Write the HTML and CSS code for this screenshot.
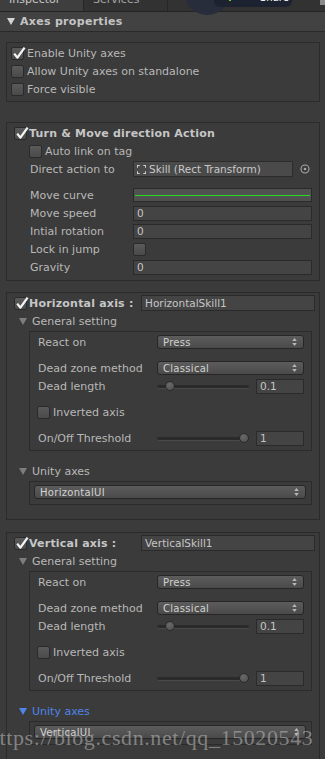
FILE: index.html
```html
<!DOCTYPE html>
<html lang="en">
<head>
    <meta charset="UTF-8">
    <meta name="viewport" content="width=device-width, initial-scale=1.0">
    <title>Inspector - Axes properties</title>
    <link rel="stylesheet" href="styles.css">
</head>

<body>
    <svg class="defs" aria-hidden="true">
        <symbol id="check" viewBox="0 0 14 14">
            <path d="M2.2 7.6 L5.4 11.6 L12.6 1.6" fill="none" stroke="#f4f4f4" stroke-width="2.3" stroke-linejoin="round"/>
        </symbol>
        <symbol id="tri" viewBox="0 0 8 7">
            <path d="M0 0 H8 L4 7 Z"/>
        </symbol>
        <symbol id="updown" viewBox="0 0 5 9">
            <path d="M2.5 0 L5 3.5 H0 Z M0 5.5 H5 L2.5 9 Z"/>
        </symbol>
    </svg>

    <div class="tabs">
        <div class="tab active"><span>Inspector</span></div>
        <div class="tab"><span>Services</span></div>
        <div class="tab-scroll"></div>
    </div>
    <div class="tab-orb"></div>
    <div class="tab-pill"><i></i><span>Share</span></div>

    <header class="inspector-head">
        <svg class="fold light"><use href="#tri"/></svg>
        Axes properties
    </header>

    <main class="panel">
        <!-- unity axes toggles -->
        <section class="box toggles">
            <div class="row"><span class="cb"><svg><use href="#check"/></svg></span>Enable Unity axes</div>
            <div class="row"><span class="cb"></span>Allow Unity axes on standalone</div>
            <div class="row"><span class="cb"></span>Force visible</div>
        </section>

        <!-- turn & move -->
        <section class="box action">
            <div class="row head"><span class="cb"><svg><use href="#check"/></svg></span>Turn &amp; Move direction Action</div>
            <div class="row sub"><span class="cb"></span>Auto link on tag</div>
            <div class="row prop">
                <span class="name">Direct action to</span>
                <div class="obj-field">
                    <svg class="rect-icon" viewBox="0 0 10 10">
                        <path d="M0.5 3 V0.5 H3 M7 0.5 H9.5 V3 M9.5 7 V9.5 H7 M3 9.5 H0.5 V7" fill="none" stroke="#d0d0d0" stroke-width="1.2"/>
                    </svg>Skill (Rect Transform)
                </div>
                <svg class="pick" viewBox="0 0 10 10">
                    <circle cx="5" cy="5" r="4" fill="none" stroke="#a8a8a8" stroke-width="1.1"/>
                    <circle cx="5" cy="5" r="1.3" fill="#a8a8a8"/>
                </svg>
            </div>
            <div class="row prop gap">
                <span class="name">Move curve</span>
                <div class="curve"></div>
            </div>
            <div class="row prop">
                <span class="name">Move speed</span>
                <div class="field">0</div>
            </div>
            <div class="row prop">
                <span class="name">Intial rotation</span>
                <div class="field">0</div>
            </div>
            <div class="row prop">
                <span class="name">Lock in jump</span>
                <span class="cb"></span>
            </div>
            <div class="row prop">
                <span class="name">Gravity</span>
                <div class="field">0</div>
            </div>
        </section>

        <!-- horizontal axis -->
        <section class="box axis">
            <div class="row head">
                <span class="cb"><svg><use href="#check"/></svg></span>
                <span class="head-name">Horizontal axis :</span>
                <div class="field name-field">HorizontalSkill1</div>
            </div>
            <div class="row fold-row"><svg class="fold"><use href="#tri"/></svg>General setting</div>
            <div class="inner">
                <div class="row">
                    <span class="name">React on</span>
                    <div class="dropdown"><span>Press</span><svg><use href="#updown"/></svg></div>
                </div>
                <div class="row gap">
                    <span class="name">Dead zone method</span>
                    <div class="dropdown"><span>Classical</span><svg><use href="#updown"/></svg></div>
                </div>
                <div class="row">
                    <span class="name">Dead length</span>
                    <div class="slider"><span class="thumb" style="--v: 0.1"></span></div>
                    <div class="field num">0.1</div>
                </div>
                <div class="row gap inv"><span class="cb"></span>Inverted axis</div>
                <div class="row gap">
                    <span class="name">On/Off Threshold</span>
                    <div class="slider"><span class="thumb" style="--v: 1"></span></div>
                    <div class="field num">1</div>
                </div>
            </div>
            <div class="row fold-row unity-row"><svg class="fold"><use href="#tri"/></svg>Unity axes</div>
            <div class="axes-box">
                <div class="dropdown"><span>HorizontalUI</span><svg><use href="#updown"/></svg></div>
            </div>
        </section>

        <!-- vertical axis -->
        <section class="box axis">
            <div class="row head">
                <span class="cb"><svg><use href="#check"/></svg></span>
                <span class="head-name">Vertical axis :</span>
                <div class="field name-field">VerticalSkill1</div>
            </div>
            <div class="row fold-row"><svg class="fold"><use href="#tri"/></svg>General setting</div>
            <div class="inner">
                <div class="row">
                    <span class="name">React on</span>
                    <div class="dropdown"><span>Press</span><svg><use href="#updown"/></svg></div>
                </div>
                <div class="row gap">
                    <span class="name">Dead zone method</span>
                    <div class="dropdown"><span>Classical</span><svg><use href="#updown"/></svg></div>
                </div>
                <div class="row">
                    <span class="name">Dead length</span>
                    <div class="slider"><span class="thumb" style="--v: 0.1"></span></div>
                    <div class="field num">0.1</div>
                </div>
                <div class="row gap inv"><span class="cb"></span>Inverted axis</div>
                <div class="row gap">
                    <span class="name">On/Off Threshold</span>
                    <div class="slider"><span class="thumb" style="--v: 1"></span></div>
                    <div class="field num">1</div>
                </div>
            </div>
            <div class="row fold-row unity-row focus"><svg class="fold"><use href="#tri"/></svg>Unity axes</div>
            <div class="axes-box">
                <div class="dropdown"><span>VerticalUI</span><svg><use href="#updown"/></svg></div>
            </div>
        </section>
    </main>

    <div class="watermark">https://blog.csdn.net/qq_15020543</div>
</body>
</html>
```

FILE: styles.css
```css
/* General */
* {
    margin: 0;
    padding: 0;
    box-sizing: border-box;
}

html, body {
    height: 100%;
    overflow: hidden;
}

body {
    background: #3b3b3b;
    color: #b8b8b8;
    font-family: "DejaVu Sans", Verdana, sans-serif;
    font-size: 11px;
    position: relative;
}

.defs {
    position: absolute;
    width: 0;
    height: 0;
}

/* Window tabs (cut off at the top) */
.tabs {
    height: 12px;
    display: flex;
    background: #323232;
    border-bottom: 1px solid #232323;
    overflow: hidden;
    color: #a4a4a4;
}

.tab {
    width: 84px;
    padding-left: 9px;
    border-right: 1px solid #262626;
}

.tab.active {
    background: #3e3e3e;
    color: #c8c8c8;
}

.tab span {
    display: block;
    line-height: 11px;
    margin-top: -6px;
}

.tab-scroll {
    margin-left: auto;
    width: 5px;
    height: 5px;
    background: #8a8a8a;
}

.tab-orb {
    position: absolute;
    left: 184px;
    top: -31px;
    width: 46px;
    height: 46px;
    border-radius: 50%;
    background: #282d3b;
}

.tab-pill {
    position: absolute;
    left: 214px;
    top: -5px;
    width: 78px;
    height: 12px;
    border-radius: 6px;
    background: #1d2230;
    overflow: hidden;
    color: #ffffff;
}

.tab-pill i {
    position: absolute;
    left: 15px;
    top: 2px;
    width: 2px;
    height: 4px;
    background: #6bd13a;
}

.tab-pill span {
    position: absolute;
    left: 46px;
    top: -3px;
    font-size: 10px;
}

/* Component header */
.inspector-head {
    height: 20px;
    display: flex;
    align-items: center;
    gap: 5px;
    padding-left: 7px;
    background: #424242;
    border-bottom: 1px solid #2a2a2a;
    font-weight: bold;
    color: #c4c4c4;
    letter-spacing: 0.3px;
}

.fold {
    width: 8px;
    height: 7px;
    flex: none;
    fill: #7d7d7d;
}

.fold.light {
    fill: #d4d4d4;
}

.panel {
    padding: 10px 5px 0 6px;
}

.box {
    border: 1px solid #2b2b2b;
}

.row {
    display: flex;
    align-items: center;
    height: 18px;
    white-space: nowrap;
}

.gap {
    margin-top: 8px;
}

/* Toggle */
.cb {
    width: 13px;
    height: 13px;
    flex: none;
    position: relative;
    margin-right: 3px;
    border: 1px solid #2a2a2a;
    border-radius: 2px;
    background: linear-gradient(#5a5a5a, #4a4a4a);
}

.cb svg {
    position: absolute;
    left: 0;
    top: -2px;
    width: 14px;
    height: 14px;
    overflow: visible;
}

.toggles {
    padding: 1px 0 3px 4px;
    margin-bottom: 20px;
}

/* Turn & Move */
.action {
    padding: 1px 7px 4px 0;
    margin-bottom: 11px;
}

.head {
    padding-left: 7px;
    font-weight: bold;
    color: #c6c6c6;
    letter-spacing: 0.2px;
}

.head .cb {
    margin-right: 2px;
}

.sub {
    padding-left: 22px;
}

.prop {
    padding-left: 23px;
}

.prop .name {
    width: 103px;
    flex: none;
}

.field {
    flex: 1;
    height: 15px;
    padding-left: 3px;
    background: #444444;
    border: 1px solid #2a2a2a;
    font-size: 10.5px;
    line-height: 13px;
    color: #c6c6c6;
}

.obj-field {
    width: 160px;
    flex: none;
    height: 16px;
    display: flex;
    align-items: center;
    gap: 3px;
    padding-left: 3px;
    background: #4a4a4a;
    border: 1px solid #2c2c2c;
    font-size: 10.5px;
    color: #c8c8c8;
}

.rect-icon {
    width: 9px;
    height: 9px;
    flex: none;
}

.pick {
    width: 10px;
    height: 10px;
    margin-left: 7px;
}

.curve {
    flex: 1;
    height: 14px;
    position: relative;
    background: #505050;
    border: 1px solid #2a2a2a;
}

.curve::after {
    content: "";
    position: absolute;
    left: 1px;
    right: 1px;
    top: 6px;
    height: 1px;
    background: #22dd22;
}

/* Axis blocks */
.axis {
    padding: 1px 0 14px 0;
    margin-bottom: 12px;
}

.axis .head {
    padding-right: 4px;
}

.head-name {
    width: 112px;
    flex: none;
}

.name-field {
    height: 16px;
    font-weight: normal;
    letter-spacing: 0;
    line-height: 14px;
}

.fold-row {
    padding-left: 12px;
    gap: 5px;
}

.inner {
    margin: 1px 7px 0 22px;
    padding: 1px 7px 3px 8px;
    border: 1px solid #2b2b2b;
}

.inner .name {
    width: 119px;
    flex: none;
}

.inv .cb {
    margin-left: -1px;
}

.dropdown {
    flex: 1;
    height: 14px;
    display: flex;
    align-items: center;
    justify-content: space-between;
    padding: 0 6px 0 5px;
    border: 1px solid #262626;
    border-radius: 3px;
    background: linear-gradient(#5c5c5c, #4a4a4a);
    font-size: 10px;
    letter-spacing: 0.3px;
    color: #d2d2d2;
}

.dropdown svg {
    width: 5px;
    height: 8px;
    fill: #b8b8b8;
}

.slider {
    flex: 1;
    height: 18px;
    position: relative;
    margin-right: 7px;
}

.slider::before {
    content: "";
    position: absolute;
    left: 0;
    right: 0;
    top: 8px;
    height: 3px;
    border-radius: 2px;
    background: #2a2a2a;
    border-bottom: 1px solid #4a4a4a;
}

.thumb {
    position: absolute;
    top: 4px;
    left: calc(var(--v) * (100% - 10px));
    width: 10px;
    height: 10px;
    border-radius: 50%;
    border: 1px solid #2a2a2a;
    background: radial-gradient(circle at 40% 35%, #6a6a6a, #4c4c4c);
}

.num {
    width: 48px;
    flex: none;
}

.unity-row {
    margin-top: 11px;
}

.unity-row.focus {
    color: #4f84ea;
}

.unity-row.focus .fold {
    fill: #4f84ea;
}

.axes-box {
    margin: 1px 7px 0 22px;
    padding: 3px 5px 5px 4px;
    border: 1px solid #2b2b2b;
}

/* Blog watermark over the screenshot */
.watermark {
    position: absolute;
    left: -12px;
    top: 727px;
    font-family: "Liberation Serif", "Times New Roman", serif;
    font-size: 22px;
    line-height: 22px;
    letter-spacing: 0.6px;
    color: rgba(180, 180, 180, 0.6);
    white-space: nowrap;
}
```
